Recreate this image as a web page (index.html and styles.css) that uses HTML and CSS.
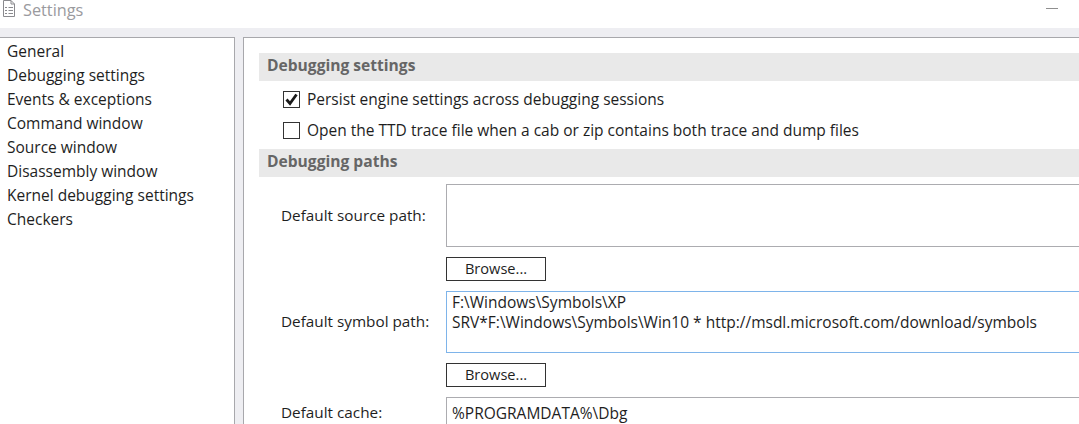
FILE: index.html
```html
<!DOCTYPE html>
<html lang="en">
<head>
<meta charset="utf-8">
<title>Settings</title>
<link rel="stylesheet" href="styles.css">
</head>
<body>
<div class="window">
  <header class="titlebar">
    <svg class="title-icon" width="14" height="18" viewBox="0 0 14 18" fill="none" stroke="#8a8a8e" stroke-width="1">
      <path d="M1.5 0.5H9L12.5 4V16.5H1.5Z"/>
      <path d="M9 0.5V4H12.5"/>
      <path d="M3 7.5H5M6.5 7.5H11M3 10.5H5M6.5 10.5H11M3 13.5H5M6.5 13.5H11"/>
    </svg>
    <span class="title-text">Settings</span>
    <span class="minimize"></span>
  </header>
  <div class="panes">
    <nav class="sidebar">
      <div class="nav-item">General</div>
      <div class="nav-item">Debugging settings</div>
      <div class="nav-item">Events &amp; exceptions</div>
      <div class="nav-item">Command window</div>
      <div class="nav-item">Source window</div>
      <div class="nav-item">Disassembly window</div>
      <div class="nav-item">Kernel debugging settings</div>
      <div class="nav-item">Checkers</div>
    </nav>
    <main class="content">
      <h2 class="section">Debugging settings</h2>
      <div class="checks">
        <label class="check">
          <span class="box">
            <svg width="15" height="15" viewBox="0 0 15 15" fill="none" stroke="#1a1a1a" stroke-width="2.8"><path d="M2.5 7.5L6 11.5L12.5 2.5"/></svg>
          </span>
          Persist engine settings across debugging sessions
        </label>
        <label class="check">
          <span class="box"></span>
          Open the TTD trace file when a cab or zip contains both trace and dump files
        </label>
      </div>
      <h2 class="section">Debugging paths</h2>
      <div class="field field-first">
        <span class="field-label">Default source path:</span>
        <div class="textbox tall"></div>
      </div>
      <div class="browse-row"><button class="browse">Browse...</button></div>
      <div class="field">
        <span class="field-label">Default symbol path:</span>
        <div class="textbox tall focused">F:\Windows\Symbols\XP<br>SRV*F:\Windows\Symbols\Win10 * http://msdl.microsoft.com/download/symbols</div>
      </div>
      <div class="browse-row"><button class="browse">Browse...</button></div>
      <div class="field field-cache">
        <span class="field-label">Default cache:</span>
        <div class="textbox">%PROGRAMDATA%\Dbg</div>
      </div>
    </main>
  </div>
</div>
</body>
</html>
```
FILE: styles.css
```css
html, body {
  margin: 0;
  height: 100%;
  overflow: hidden;
  background: #eeeef2;
}
.window {
  width: 1079px;
  height: 424px;
  display: flex;
  flex-direction: column;
  font-family: "Open Sans", "Noto Sans", sans-serif;
  font-size: 15.5px;
  color: #1e1e1e;
}
.titlebar {
  height: 28px;
  background: #fff;
  display: flex;
  align-items: flex-start;
  padding-left: 1px;
}
.title-icon { margin-left: 1px; flex: none; }
.title-text {
  margin-left: 7px;
  font-size: 16.3px;
  line-height: 20px;
  color: #9a9a9e;
}
.minimize {
  width: 12px;
  height: 1px;
  margin: 8px 21px 0 auto;
  background: #8f8f8f;
}
.panes {
  flex: 1;
  margin-top: 9px;
  display: flex;
  gap: 8px;
  min-height: 0;
}
.sidebar {
  width: 227px;
  background: #fff;
  border-top: 1px solid #a8a8ac;
  border-right: 1px solid #a8a8ac;
  padding: 1px 0 0 7px;
}
.nav-item {
  height: 24px;
  line-height: 24px;
  white-space: nowrap;
}
.content {
  flex: 1;
  min-width: 0;
  background: #fff;
  border-top: 1px solid #a8a8ac;
  border-left: 1px solid #a8a8ac;
  padding: 15px 0 0 15px;
  overflow: hidden;
}
.section {
  margin: 0;
  height: 28px;
  line-height: 25px;
  padding-left: 8px;
  background: #e9e9e9;
  font-size: 15.6px;
  font-weight: 700;
  color: #666;
}
.checks {
  padding: 3px 0 3px 24px;
  display: flex;
  flex-direction: column;
}
.check {
  height: 31px;
  line-height: 29px;
  display: flex;
  align-items: center;
  gap: 7px;
  white-space: nowrap;
}
.box {
  width: 15px;
  height: 15px;
  border: 1px solid #333;
  background: #fff;
  display: block;
  flex: none;
}
.box svg { display: block; }
.field {
  display: flex;
  align-items: center;
}
.field-first { margin-top: 7px; }
.field-label {
  width: 187px;
  padding: 0 0 2px 22px;
  box-sizing: border-box;
  white-space: nowrap;
  font-size: 15.3px;
}
.textbox {
  flex: 1;
  min-width: 0;
  border: 1px solid #acacb0;
  border-right: 0;
  height: 26px;
  padding: 0 5px;
  line-height: 20px;
  white-space: nowrap;
}
.tall {
  height: 61px;
}
.focused {
  height: 60px;
  border-color: #7eb4ea;
}
.field-cache { align-items: flex-start; }
.field-cache .field-label { padding-top: 5px; }
.field-cache .textbox { padding-top: 5px; height: 21px; }
.browse-row {
  padding: 10px 0 10px 187px;
  height: 24px;
}
.browse {
  width: 100px;
  height: 24px;
  padding: 0 0 2px;
  display: block;
  border: 1px solid #333;
  background: #fff;
  font: inherit;
  font-size: 14.6px;
  color: #1e1e1e;
}
```
